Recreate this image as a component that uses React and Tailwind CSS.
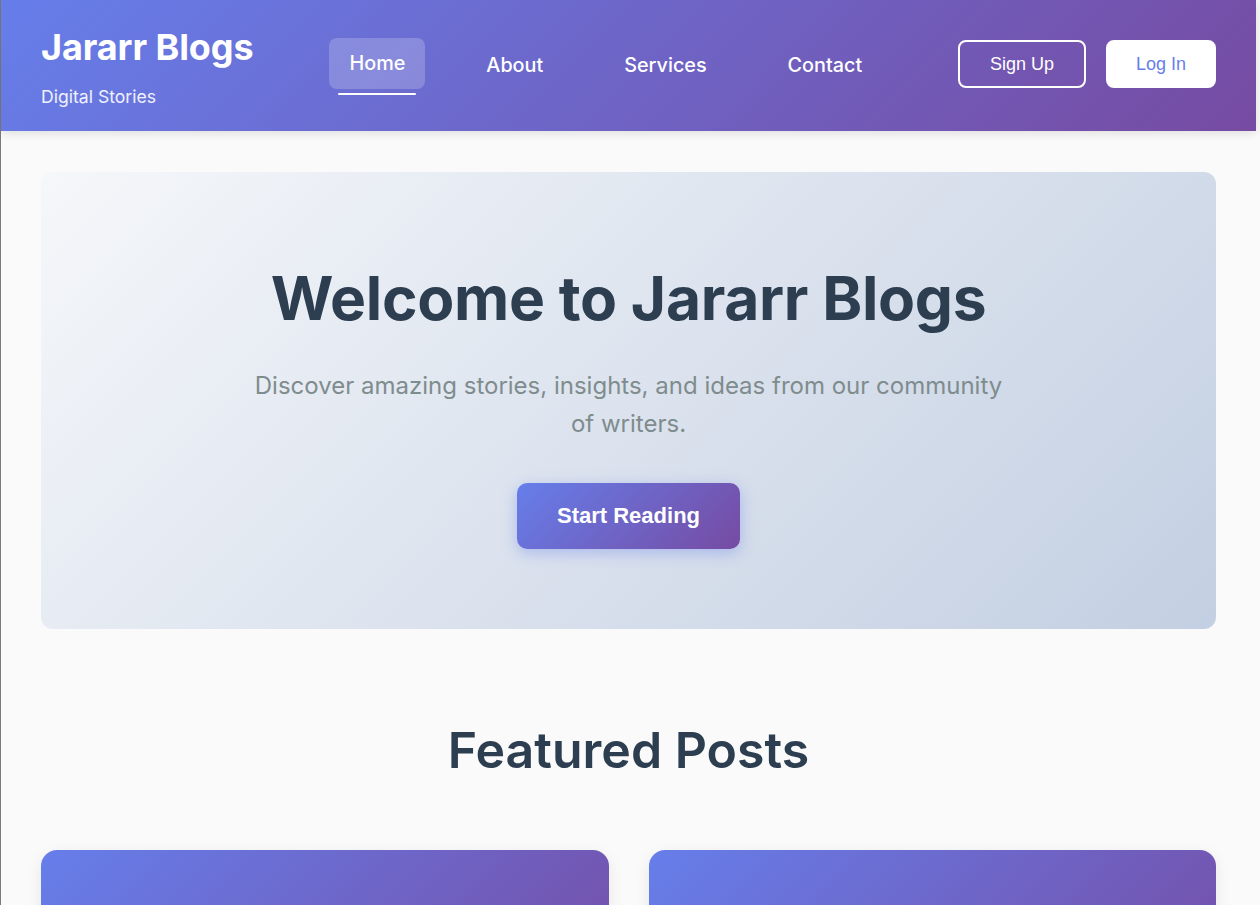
import React from "react";

const grad = "bg-[linear-gradient(135deg,#667eea_0%,#764ba2_100%)]";

const navItems = ["Home", "About", "Services", "Contact"];

const posts = [
  { title: "Getting Started with Modern Web Design", tag: "Design", date: "March 12, 2024" },
  { title: "Ten Habits of Highly Productive Writers", tag: "Writing", date: "March 8, 2024" },
];

function Header() {
  return (
    <header className={`${grad} h-[131px] px-10 flex items-center shadow-[0_2px_10px_rgba(0,0,0,0.12)] relative z-10`}>
      <div className="flex flex-col mt-[4px]">
        <h1 className="text-[36px] leading-[40px] font-bold text-white tracking-[-0.1px]">Jararr Blogs</h1>
        <p className="text-[17.6px] leading-[24px] text-white/90 mt-[18px]">Digital Stories</p>
      </div>

      <nav className="ml-[76px] flex items-center gap-[41px]">
        {navItems.map((item, i) => (
          <a key={item} href="#"
            className={`relative px-5 py-3 rounded-lg text-[19.8px] leading-[27px] font-medium text-white ${i === 0 ? "bg-white/20 -mt-[5px]" : ""}`}>
            {item}
            {i === 0 && (
              <span className="absolute left-[9px] right-[9px] -bottom-[6px] h-[2px] bg-white rounded"></span>
            )}
          </a>
        ))}
      </nav>

      <div className="ml-auto flex items-center gap-5 -mt-[3px]">
        <button className="font-['Liberation_Sans',Arial,sans-serif] text-[18px] leading-[20px] text-white border-2 border-white rounded-lg px-[30px] py-[12px]">
          Sign Up
        </button>
        <button className="font-['Liberation_Sans',Arial,sans-serif] text-[18px] leading-[20px] text-[#667eea] bg-white border-2 border-white rounded-lg px-[28px] py-[12px]">
          Log In
        </button>
      </div>
    </header>
  );
}

function Hero() {
  return (
    <section className="rounded-xl bg-[linear-gradient(135deg,#f5f7fa_0%,#c3cfe2_100%)] pt-[90px] pb-20 px-8 flex flex-col items-center text-center">
      <h2 className="text-[60.5px] leading-[73px] font-bold text-[#2c3e50] tracking-[-0.3px]">Welcome to Jararr Blogs</h2>
      <p className="mt-8 max-w-[760px] text-[24px] leading-[38px] text-[#7f8c8d]">
        Discover amazing stories, insights, and ideas from our community of writers.
      </p>
      <button className={`${grad} mt-10 font-['Liberation_Sans',Arial,sans-serif] font-bold text-[22px] leading-[26px] text-white rounded-[10px] px-10 py-5 shadow-[0_4px_15px_rgba(102,126,234,0.4)]`}>
        Start Reading
      </button>
    </section>
  );
}

function PostCard({ post }) {
  return (
    <article className="bg-white rounded-2xl overflow-hidden shadow-[0_4px_15px_rgba(0,0,0,0.08)]">
      <div className={`${grad} h-[200px]`}></div>
      <div className="p-6">
        <span className="text-xs font-semibold uppercase tracking-wider text-[#667eea]">{post.tag}</span>
        <h3 className="mt-2 text-xl font-semibold text-[#2c3e50]">{post.title}</h3>
        <p className="mt-2 text-sm text-[#7f8c8d]">{post.date}</p>
      </div>
    </article>
  );
}

export default function App() {
  return (
    <div className="min-h-screen bg-[#fafafa] border-l border-[#7a7a7a] font-['Inter','Noto_Sans',sans-serif]">
      <div className="w-[1255px]">
        <Header />
        <main className="px-10 pt-[41px] pb-16">
          <Hero />
          <h2 className="mt-[91px] text-center text-[50px] leading-[60px] font-semibold text-[#2c3e50]">Featured Posts</h2>
          <div className="mt-[70px] grid grid-cols-2 gap-10">
            {posts.map(p => <PostCard key={p.title} post={p} />)}
          </div>
        </main>
      </div>
    </div>
  );
}
